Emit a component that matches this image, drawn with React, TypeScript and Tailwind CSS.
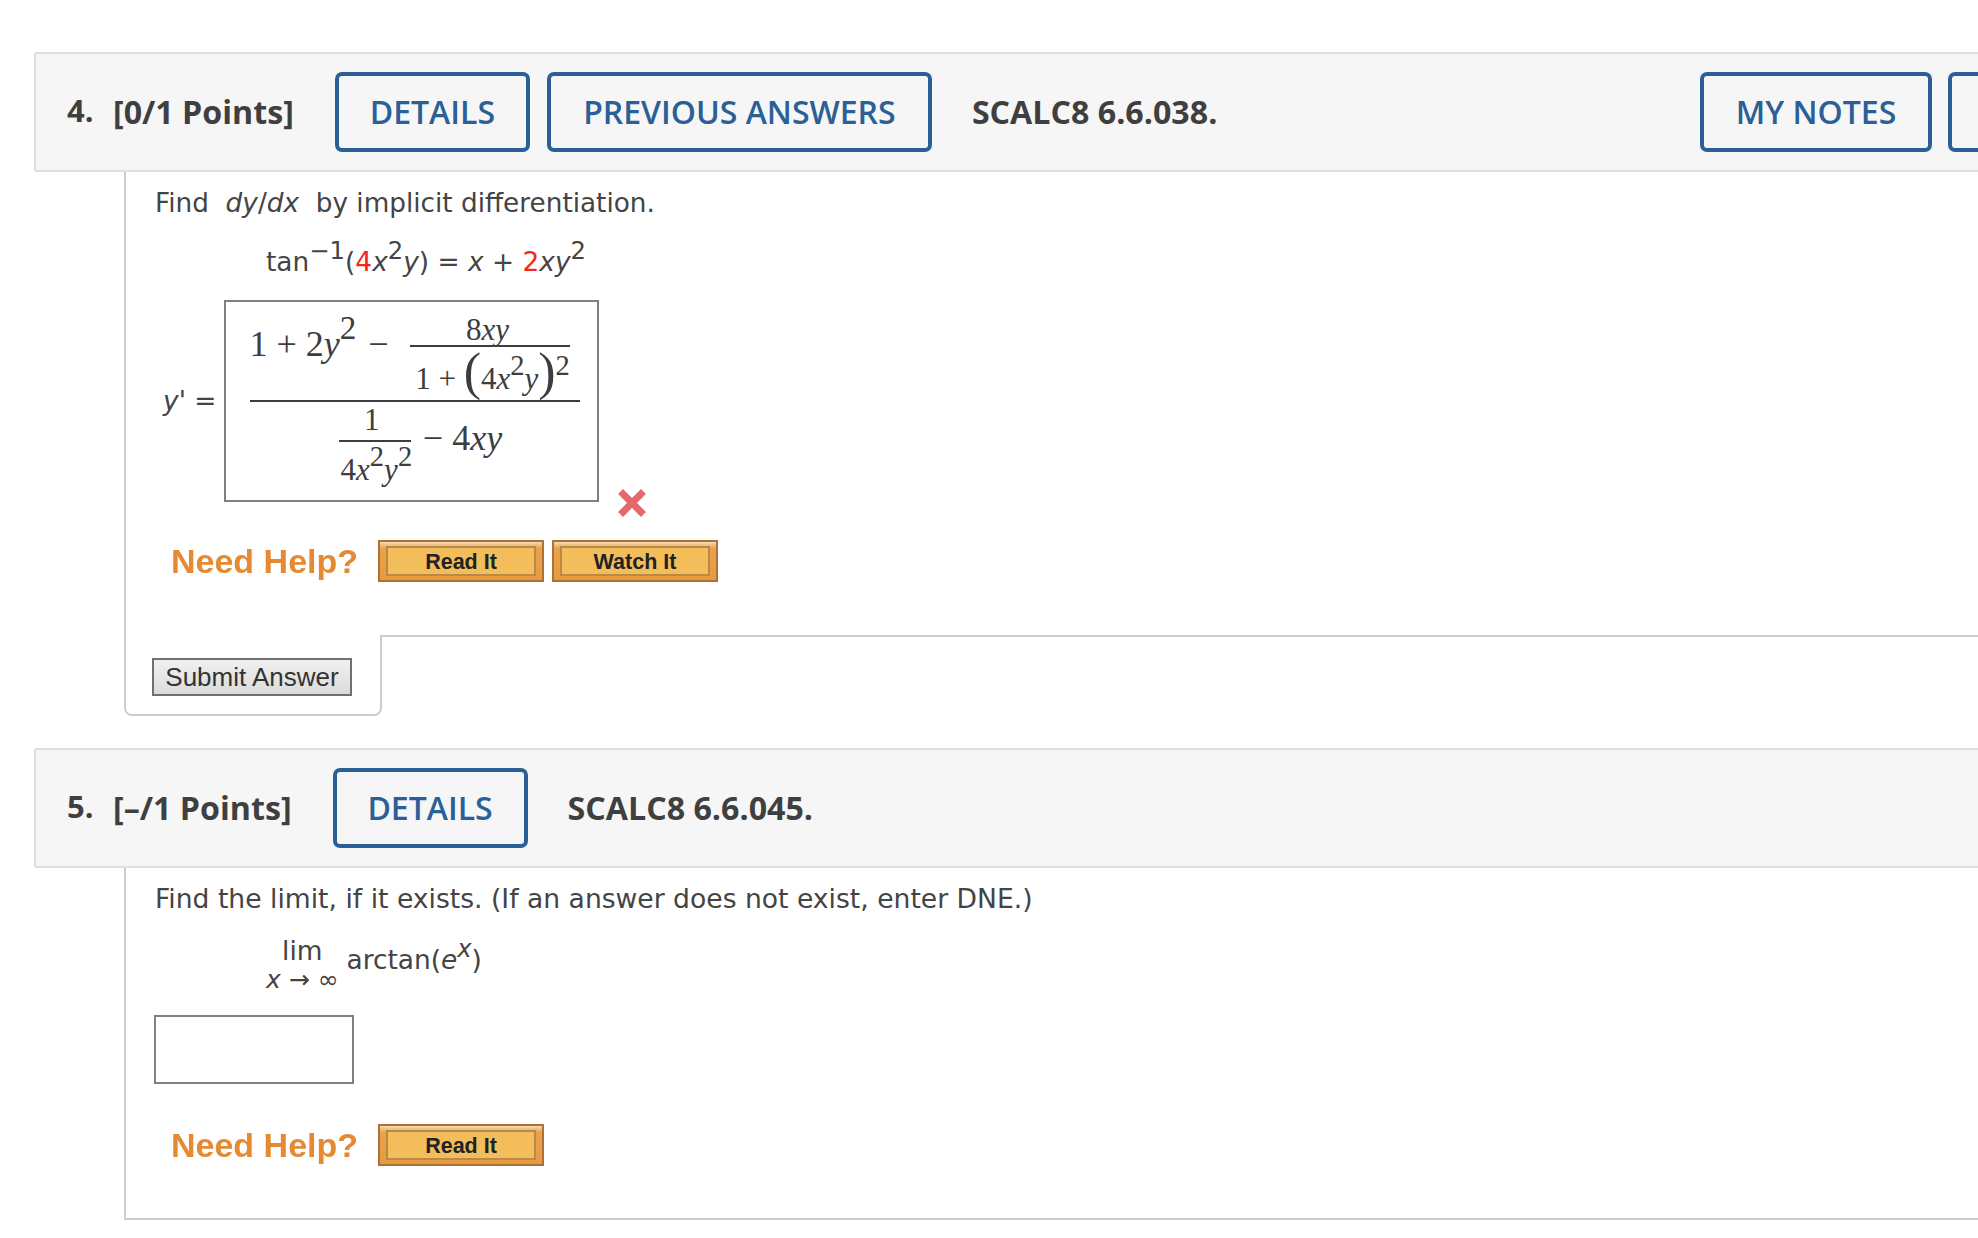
function Sup({ children, className = '' }: { children: React.ReactNode; className?: string }) {
  return <span className={`relative -top-[0.5em] text-[0.92em] leading-none ${className}`}>{children}</span>
}

function OutlineButton({ label, className = '' }: { label?: string; className?: string }) {
  return (
    <div className={`flex h-20 shrink-0 items-center justify-center rounded-[7px] border-4 border-[#2a6096] text-[32px] font-semibold text-[#2a6096] ${className}`}>
      {label}
    </div>
  )
}

function QuestionHeader({ num, points, children }: { num: string; points: string; children: React.ReactNode }) {
  return (
    <div className="flex h-[120px] w-[2044px] items-center rounded-l-[3px] border-2 border-r-0 border-[#dfdfdf] bg-[#f6f6f6] pr-[10px] pl-[31px] font-['Open_Sans',sans-serif] text-[#3f3f3f]">
      <span className="relative -top-[2px] w-[46px] text-[31px] font-bold">{num}</span>
      <span className="text-[32.2px] font-bold">{points}</span>
      {children}
    </div>
  )
}

function ResourceButton({ label }: { label: string }) {
  return (
    <div className="h-[42px] w-[166px] border-2 border-[#ab7436] bg-[linear-gradient(#f6dcb8_0px,#eaa24e_6px,#e89a41_100%)] px-[6px] py-[4px]">
      <div className="flex h-full items-center justify-center border-2 border-[#b98a45] bg-[#f2bd5a] pt-[2px] font-['Liberation_Sans',sans-serif] text-[21.5px] font-bold text-[#222]">
        {label}
      </div>
    </div>
  )
}

function NeedHelp({ buttons }: { buttons: string[] }) {
  return (
    <div className="ml-[16px] flex items-center">
      <span className="w-[207px] font-['Liberation_Sans',sans-serif] text-[34px] leading-[42px] font-bold text-[#e58a33] blur-[0.4px]">Need Help?</span>
      <div className="flex gap-[8px]">
        {buttons.map((b) => (
          <ResourceButton key={b} label={b} />
        ))}
      </div>
    </div>
  )
}

function AnswerMath() {
  return (
    <div className="flex h-[202px] w-[375px] shrink-0 justify-center border-2 border-[#808080] pt-[8px] pl-[6px] font-['Liberation_Serif',serif] text-[#3d3d3d]">
      <div className="flex w-[330px] flex-col items-center">
        <div className="flex h-[90px] w-full items-start text-[36px] leading-[40px]">
          <span className="mt-[14px] w-[160px] whitespace-pre">
            1 + 2<i>y</i>
            <Sup>2</Sup> <span className="ml-[3px]">−</span>
          </span>
          <div className="flex w-[160px] flex-col items-center text-[31px] leading-[36px]">
            <span className="h-[35px] pt-[2px] pr-[4px]">
              8<i>xy</i>
            </span>
            <div className="h-[2px] w-full bg-[#3d3d3d]" />
            <span className="whitespace-pre pt-[7px] pl-[6px]">
              1 + <span className="text-[52px] leading-[36px] font-light">(</span>4<i>x</i>
              <Sup>2</Sup>
              <i>y</i>
              <span className="text-[52px] leading-[36px] font-light">)</span>
              <Sup>2</Sup>
            </span>
          </div>
        </div>
        <div className="h-[2px] w-full bg-[#3d3d3d]" />
        <div className="flex w-full justify-center pt-[6px] pl-[12px] text-[36px] leading-[40px]">
          <div className="flex w-[72px] flex-col items-center text-[31px]">
            <span className="h-[32px] pr-[6px] leading-[24px]">1</span>
            <div className="h-[2px] w-full bg-[#3d3d3d]" />
            <span className="whitespace-pre pt-[10px] pl-[3px] leading-[36px]">
              4<i>x</i>
              <Sup>2</Sup>
              <i>y</i>
              <Sup>2</Sup>
            </span>
          </div>
          <span className="mt-[10px] ml-[12px] whitespace-pre">
            − 4<i>xy</i>
          </span>
        </div>
      </div>
    </div>
  )
}

function XMark() {
  return (
    <svg viewBox="0 0 28 28" className="mb-[-15px] ml-[19px] h-[28px] w-[28px] shrink-0">
      <path d="M5 5 L23 23 M23 5 L5 23" stroke="#e4686c" strokeWidth="7" strokeLinecap="square" />
    </svg>
  )
}

export default function App() {
  return (
    <div className="h-[1238px] w-[1978px] overflow-hidden bg-white pt-[52px] pl-[34px] font-['DejaVu_Sans',sans-serif] text-[26.4px] text-[#444]">
      <QuestionHeader num="4." points="[0/1 Points]">
        <OutlineButton label="DETAILS" className="ml-[41px] w-[195px]" />
        <OutlineButton label="PREVIOUS ANSWERS" className="ml-[17px] w-[385px]" />
        <span className="ml-[40px] text-[32.2px] font-bold">SCALC8 6.6.038.</span>
        <OutlineButton label="MY NOTES" className="ml-auto w-[232px]" />
        <OutlineButton className="ml-[16px] w-[120px]" />
      </QuestionHeader>

      <div className="ml-[90px]">
        <div className="h-[463px] border-l-2 border-[#cccccc] pl-[29px]">
          <p className="pt-[13px] text-[26.3px] leading-[36px]">
            Find&nbsp; <i>dy</i>/<i>dx</i>&nbsp; by implicit differentiation.
          </p>
          <p className="mt-[23px] pl-[111px] leading-[36px]">
            tan<Sup>−1</Sup>(<span className="text-[#f0281e]">4</span>
            <i>x</i>
            <Sup>2</Sup>
            <i>y</i>) = <i>x</i> + <span className="text-[#f0281e]">2</span>
            <i>xy</i>
            <Sup>2</Sup>
          </p>
          <div className="mt-[20px] -ml-[29px] flex h-[202px] items-end">
            <div className="flex h-full w-[98px] items-center pl-[37px]">
              <i>y</i>' =
            </div>
            <AnswerMath />
            <XMark />
          </div>
          <div className="mt-[38px]">
            <NeedHelp buttons={['Read It', 'Watch It']} />
          </div>
        </div>

        <div className="flex">
          <div className="h-[81px] w-[258px] shrink-0 rounded-b-[8px] border-r-2 border-b-2 border-l-2 border-[#cccccc] pt-[23px] pl-[26px]">
            <div className="flex h-[38px] w-[200px] items-center justify-center border-2 border-[#707070] bg-linear-to-b from-[#f0f0f0] to-[#dcdcdc] font-['Liberation_Sans',sans-serif] text-[26px] text-[#333]">
              Submit Answer
            </div>
          </div>
          <div className="flex-1 border-t-2 border-[#cccccc]" />
        </div>
      </div>

      <div className="mt-[32px]">
        <QuestionHeader num="5." points="[–/1 Points]">
          <OutlineButton label="DETAILS" className="ml-[41px] w-[195px]" />
          <span className="ml-[40px] text-[32.2px] font-bold">SCALC8 6.6.045.</span>
        </QuestionHeader>
      </div>

      <div className="ml-[90px] h-[352px] border-b-2 border-l-2 border-[#cccccc] pl-[29px]">
        <p className="pt-[13px] text-[26.6px] leading-[36px]">Find the limit, if it exists. (If an answer does not exist, enter DNE.)</p>
        <div className="mt-[17px] ml-[111px] flex items-start">
          <div className="flex flex-col items-center leading-none">
            <span className="leading-[34px]">lim</span>
            <span className="text-[25px] leading-[24px]">
              <i>x</i> → ∞
            </span>
          </div>
          <span className="mt-[8px] ml-[8px] leading-[36px]">
            arctan(<i>e</i>
            <Sup>
              <i>x</i>
            </Sup>
            )
          </span>
        </div>
        <div className="mt-[23px] -ml-px h-[69px] w-[200px] border-2 border-[#808080] bg-white" />
        <div className="mt-[40px]">
          <NeedHelp buttons={['Read It']} />
        </div>
      </div>
    </div>
  )
}
